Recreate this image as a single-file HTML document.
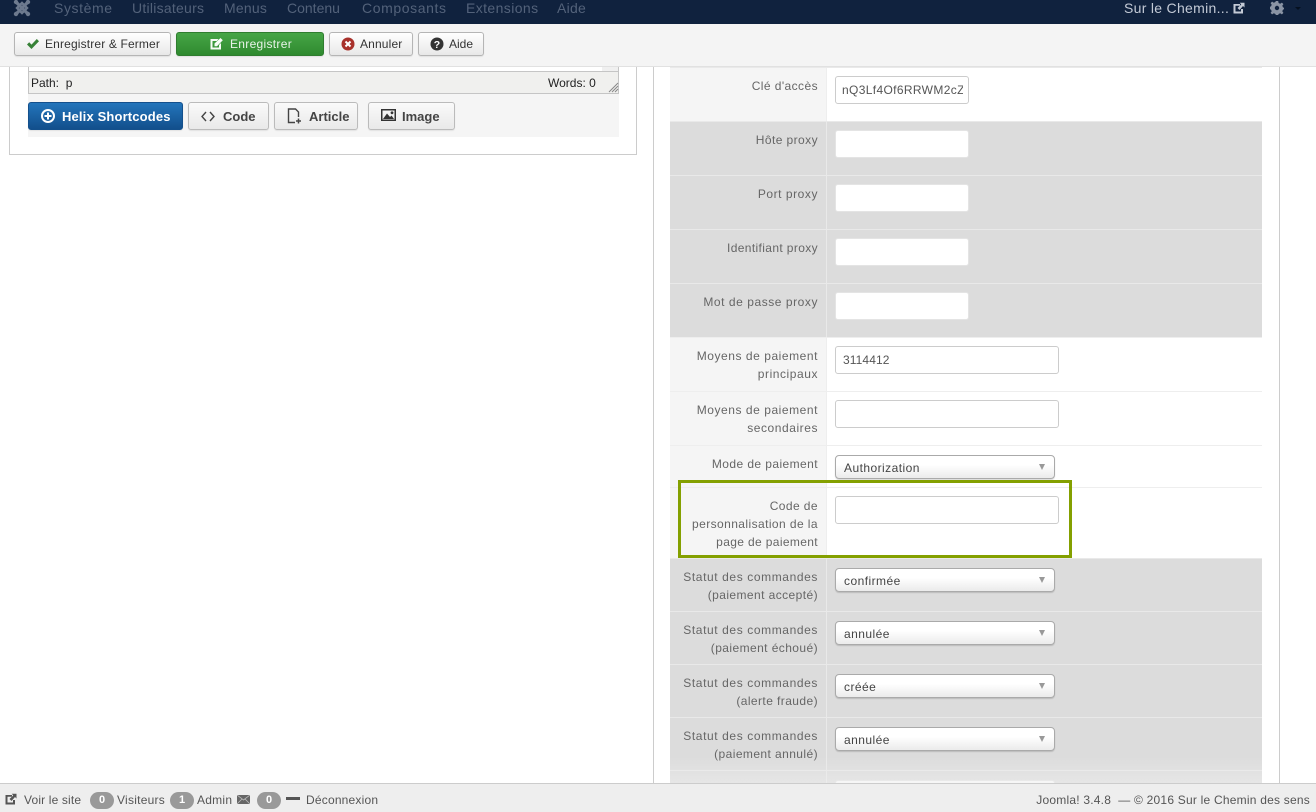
<!DOCTYPE html>
<html><head><meta charset="utf-8"><title>Joomla</title>
<style>
html,body{margin:0;padding:0;width:1316px;height:812px;overflow:hidden;background:#fff;font-family:"Liberation Sans",sans-serif;font-size:12px;color:#555}
.a{position:absolute}
svg{position:absolute;display:block}
#nav{left:0;top:0;width:1316px;height:24px;background:#10223e}
#nav span{position:absolute;top:-1px;font-size:14px;line-height:18px;color:#53627a;white-space:nowrap}
#bar{left:0;top:24px;width:1316px;height:42px;background:#f4f4f4;border-bottom:1px solid #e1e1e1;z-index:5}
.b{position:absolute;box-sizing:border-box;border:1px solid #b5b5b5;border-radius:3px;background:linear-gradient(#fff,#e8e8e8);color:#333;font-size:12px;white-space:nowrap;box-shadow:0 1px 1px rgba(0,0,0,.08)}
.b i{position:absolute;font-style:normal;white-space:nowrap}
.h{font-weight:bold;font-size:13px;color:#444;border-color:#bbb;background:linear-gradient(#fafafa,#e9e9e9)}
.row{position:absolute;left:670px;width:592px;box-sizing:border-box;border-top:1px solid #eee}
.row.g{background:#dcdcdc;border-top-color:#e9e9e9}
.lab{position:absolute;left:0;top:0;bottom:0;width:157px;box-sizing:border-box;background:#f5f5f5;border-right:1px solid #eee;text-align:right;padding-right:8px;color:#666;font-size:12px;line-height:18px;letter-spacing:.42px}
.row.g .lab{background:#dcdcdc;border-right-color:#e9e9e9;color:#666}
.lab div{position:absolute;right:8px;white-space:nowrap}
.lab .s{letter-spacing:.6px}
.lab .m{letter-spacing:.55px}
.in{position:absolute;box-sizing:border-box;height:28px;background:#fff;border:1px solid #ccc;border-radius:3px;font-size:12px;color:#555;line-height:26px;padding-left:7px;overflow:hidden;white-space:nowrap;letter-spacing:.1px}
.sel{position:absolute;left:835px;width:220px;height:24px;box-sizing:border-box;border:1px solid #aaa;border-radius:4px;background:linear-gradient(#fff 40%,#ebebeb);box-shadow:0 1px 1px rgba(0,0,0,.15);font-size:12px;color:#444;line-height:24px;padding-left:8px;letter-spacing:.45px}
.sel:after{content:"";position:absolute;right:9px;top:8px;border-left:3.5px solid transparent;border-right:3.5px solid transparent;border-top:6px solid #999}
#foot{left:0;top:783px;width:1316px;height:29px;background:#eee;border-top:1px solid #ccc;box-sizing:border-box;z-index:6}
#foot span{position:absolute;top:8px;line-height:16px;font-size:12px;color:#555;white-space:nowrap;letter-spacing:.15px}
.pill{position:absolute;top:8px;width:24px;height:17px;border-radius:9px;background:#999;color:#fff;text-align:center;font-size:11px;font-weight:bold;line-height:17px}
</style></head><body>

<div id="nav" class="a">
<svg style="left:13px;top:-1px" width="18" height="18" viewBox="0 0 18 18"><g stroke="#6d7a8e" stroke-width="3.2" fill="none"><path d="M3 3L15 15M15 3L3 15"/><path d="M4 9L9 4L14 9L9 14Z" stroke-width="2.4"/></g><g fill="#6d7a8e"><circle cx="3" cy="3" r="2.2"/><circle cx="15" cy="3" r="2.2"/><circle cx="3" cy="15" r="2.2"/><circle cx="15" cy="15" r="2.2"/></g></svg>
<span style="left:54px;letter-spacing:.6px">Système</span>
<span style="left:132px;letter-spacing:.25px">Utilisateurs</span>
<span style="left:224px;letter-spacing:.2px">Menus</span>
<span style="left:287px">Contenu</span>
<span style="left:362px;letter-spacing:.6px">Composants</span>
<span style="left:466px;letter-spacing:.4px">Extensions</span>
<span style="left:557px;letter-spacing:.25px">Aide</span>
<span style="left:1124px;color:#c3cad6;letter-spacing:.3px">Sur le Chemin...</span>
<svg style="left:1233px;top:2px" width="12" height="12" viewBox="0 0 12 12"><path d="M0.5 2H7V3.8H2.5V9.5H8V7H10V11.5H0.5Z" fill="#c3cad6"/><path d="M4.5 6L8.2 2.5L6.8 .8H11.5V5.5L10 4L6.5 8Z" fill="#c3cad6"/></svg>
<svg style="left:1270px;top:1px" width="14" height="14" viewBox="0 0 14 14"><path d="M5.8 0H8.2L8.6 2L10.2 2.7L11.9 1.6L13.4 3.1L12.3 4.8L13 6.4L14 6.8V8.2L13 8.6L12.3 10.2L13.4 11.9L11.9 13.4L10.2 12.3L8.6 13L8.2 14H5.8L5.4 13L3.8 12.3L2.1 13.4L.6 11.9L1.7 10.2L1 8.6L0 8.2V5.8L1 5.4L1.7 3.8L.6 2.1L2.1 .6L3.8 1.7L5.4 1Z M7 4.8A2.2 2.2 0 1 0 7 9.2A2.2 2.2 0 1 0 7 4.8Z" fill="#8a94a4" fill-rule="evenodd"/></svg>
<svg style="left:1294px;top:7px" width="8" height="4" viewBox="0 0 8 4"><path d="M1 0H7L4 3Z" fill="#05101f"/></svg>
</div>

<div id="bar" class="a">
<div class="b" style="left:14px;top:8px;width:157px;height:24px"><svg style="left:11px;top:5px" width="14" height="12" viewBox="0 0 14 12"><path d="M1 6.5L3.2 4.3L5.5 6.6L10.8 1L13 3.2L5.5 11Z" fill="#378137"/></svg><i style="left:30px;top:4px;line-height:14px;letter-spacing:.15px">Enregistrer &amp; Fermer</i></div>
<div class="b" style="left:176px;top:8px;width:148px;height:24px;background:linear-gradient(#46a546,#2f8a2f);border-color:#2f7d2f;color:#e8f3e8"><svg style="left:33px;top:5px" width="13" height="12" viewBox="0 0 13 12"><path d="M.5 1H8.5L6.8 3H2.5V9.5H9V7L11 5V11.5H.5Z" fill="#f6fbf6"/><path d="M4.5 5.5L10.5 0L12.8 2.2L7 8.2H4.5Z" fill="#f6fbf6"/></svg><i style="left:53px;top:4px;line-height:14px;letter-spacing:.3px">Enregistrer</i></div>
<div class="b" style="left:329px;top:8px;width:84px;height:24px"><svg style="left:11px;top:4px" width="14" height="14" viewBox="0 0 14 14"><circle cx="7" cy="7" r="6.5" fill="#a8312b"/><path d="M4.5 4.5L9.5 9.5M9.5 4.5L4.5 9.5" stroke="#fff" stroke-width="2"/></svg><i style="left:30px;top:4px;line-height:14px;letter-spacing:.15px">Annuler</i></div>
<div class="b" style="left:418px;top:8px;width:66px;height:24px"><svg style="left:11px;top:4px" width="14" height="14" viewBox="0 0 14 14"><circle cx="7" cy="7" r="6.5" fill="#333"/><text x="7" y="11" font-family="Liberation Sans" font-size="10.5" font-weight="bold" fill="#fff" text-anchor="middle">?</text></svg><i style="left:30px;top:4px;line-height:14px">Aide</i></div>
</div>

<!-- left column -->
<div class="a" style="left:9px;top:60px;width:628px;height:95px;box-sizing:border-box;border:1px solid #ccc;border-top:none"></div>
<div class="a" style="left:28px;top:66px;width:591px;height:71px;background:#f5f5f5"></div>
<div class="a" style="left:28px;top:66px;width:591px;height:28px;box-sizing:border-box;border:1px solid #c5c5c5;border-top:none;background:#fff"></div>
<div class="a" style="left:602px;top:66px;width:16px;height:5px;background:#f0f0f0"></div>
<div class="a" style="left:29px;top:71px;width:589px;height:22px;background:#f0f0ee;border-top:1px solid #c5c5c5;box-sizing:border-box;color:#222;font-size:12px;line-height:22px"><span class="a" style="left:2px;top:0">Path:&nbsp; p</span><span class="a" style="left:519px;top:0;white-space:nowrap">Words: 0</span></div>
<svg style="left:608px;top:82px" width="11" height="11" viewBox="0 0 11 11"><path d="M1 10L10 1M4 10L10 4M7 10L10 7" stroke="#888" stroke-width="1"/></svg>

<div class="b h" style="left:28px;top:102px;width:155px;height:28px;background:linear-gradient(#2375bb,#124f8c);border-color:#14508c;color:#fff"><svg style="left:12px;top:6px" width="14" height="14" viewBox="0 0 14 14"><circle cx="7" cy="7" r="6" fill="none" stroke="#fff" stroke-width="2"/><path d="M7 3.5V10.5M3.5 7H10.5" stroke="#fff" stroke-width="2"/></svg><i style="left:33px;top:6px;line-height:16px;letter-spacing:.15px">Helix Shortcodes</i></div>
<div class="b h" style="left:188px;top:102px;width:81px;height:28px"><svg style="left:12px;top:8px" width="14" height="11" viewBox="0 0 14 11"><path d="M5 1L1 5.5L5 10M9 1L13 5.5L9 10" fill="none" stroke="#444" stroke-width="1.4"/></svg><i style="left:34px;top:6px;line-height:16px">Code</i></div>
<div class="b h" style="left:274px;top:102px;width:84px;height:28px"><svg style="left:12px;top:5px" width="15" height="16" viewBox="0 0 15 16"><path d="M8 14.5H1.5V1H8.5L11.5 4V9" fill="none" stroke="#444" stroke-width="1.4"/><path d="M11.5 10.5V15.5M9 13H14" stroke="#444" stroke-width="1.5"/></svg><i style="left:34px;top:6px;line-height:16px">Article</i></div>
<div class="b h" style="left:368px;top:102px;width:87px;height:28px"><svg style="left:12px;top:6px" width="15" height="12" viewBox="0 0 15 12"><path d="M0 0H15V12H0Z M1.5 1.5V10.5H13.5V1.5Z" fill="#333" fill-rule="evenodd"/><path d="M2 10L6 4.5L9 8L10.5 6.5L13 10Z" fill="#333"/><circle cx="11" cy="3.8" r="1.4" fill="#333"/></svg><i style="left:33px;top:6px;line-height:16px">Image</i></div>

<!-- right column lines -->
<div class="a" style="left:653px;top:66px;width:1px;height:720px;background:#ccc"></div>
<div class="a" style="left:1279px;top:66px;width:1px;height:720px;background:#ccc"></div>

<div class="row" style="top:67px;height:54px;border-top-color:#e9e9e9"><div class="lab"><div style="top:9px">Clé d'accès</div></div></div>
<div class="row g" style="top:121px;height:54px"><div class="lab"><div style="top:9px">Hôte proxy</div></div></div>
<div class="row g" style="top:175px;height:54px"><div class="lab"><div class="m" style="top:9px">Port proxy</div></div></div>
<div class="row g" style="top:229px;height:54px"><div class="lab"><div style="top:9px;letter-spacing:.37px">Identifiant proxy</div></div></div>
<div class="row g" style="top:283px;height:54px"><div class="lab"><div class="m" style="top:9px">Mot de passe proxy</div></div></div>
<div class="row" style="top:337px;height:54px"><div class="lab"><div class="m" style="top:9px">Moyens de paiement</div><div class="m" style="top:27px">principaux</div></div></div>
<div class="row" style="top:391px;height:54px"><div class="lab"><div class="m" style="top:9px">Moyens de paiement</div><div class="m" style="top:27px">secondaires</div></div></div>
<div class="row" style="top:445px;height:42px"><div class="lab"><div style="top:9px">Mode de paiement</div></div></div>
<div class="row" style="top:487px;height:71px"><div class="lab"><div style="top:9px">Code de</div><div style="top:27px">personnalisation de la</div><div style="top:45px;letter-spacing:.36px">page de paiement</div></div></div>
<div class="row g" style="top:558px;height:53px"><div class="lab"><div class="s" style="top:9px">Statut des commandes</div><div style="top:27px">(paiement accepté)</div></div></div>
<div class="row g" style="top:611px;height:53px"><div class="lab"><div class="s" style="top:9px">Statut des commandes</div><div style="top:27px">(paiement échoué)</div></div></div>
<div class="row g" style="top:664px;height:53px"><div class="lab"><div class="s" style="top:9px">Statut des commandes</div><div style="top:27px">(alerte fraude)</div></div></div>
<div class="row g" style="top:717px;height:53px"><div class="lab"><div class="s" style="top:9px">Statut des commandes</div><div style="top:27px">(paiement annulé)</div></div></div>
<div class="row g" style="top:770px;height:14px"><div class="lab"></div></div>

<div class="in" style="left:835px;top:76px;width:134px;padding-left:6px"><div style="width:121px;overflow:hidden;letter-spacing:.35px">nQ3Lf4Of6RRWM2cZ</div></div>
<div class="in" style="left:835px;top:130px;width:134px;border-color:#e4e4e4"></div>
<div class="in" style="left:835px;top:184px;width:134px;border-color:#e4e4e4"></div>
<div class="in" style="left:835px;top:238px;width:134px;border-color:#e4e4e4"></div>
<div class="in" style="left:835px;top:292px;width:134px;border-color:#e4e4e4"></div>
<div class="in" style="left:835px;top:346px;width:224px">3114412</div>
<div class="in" style="left:835px;top:400px;width:224px"></div>
<div class="sel" style="top:455px">Authorization</div>
<div class="in" style="left:835px;top:496px;width:224px"></div>
<div class="sel" style="top:568px">confirmée</div>
<div class="sel" style="top:621px">annulée</div>
<div class="sel" style="top:674px">créée</div>
<div class="sel" style="top:727px">annulée</div>
<div class="in" style="left:835px;top:780px;width:220px;border-color:#e4e4e4"></div>

<div class="a" style="left:670px;top:757px;width:592px;height:26px;background:linear-gradient(rgba(238,238,238,0),rgba(238,238,238,.55));"></div>

<div class="a" style="left:678px;top:480px;width:394px;height:78px;box-sizing:border-box;border:3px solid #84a000"></div>

<div id="foot" class="a">
<svg style="left:5px;top:9px" width="12" height="12" viewBox="0 0 12 12"><path d="M0.5 2H7V3.8H2.5V9.5H8V7H10V11.5H0.5Z" fill="#555"/><path d="M4.5 6L8.2 2.5L6.8 .8H11.5V5.5L10 4L6.5 8Z" fill="#555"/></svg>
<span style="left:24px">Voir le site</span>
<div class="pill" style="left:90px">0</div><span style="left:117px;letter-spacing:.25px">Visiteurs</span>
<div class="pill" style="left:170px">1</div><span style="left:197px;letter-spacing:.25px">Admin</span>
<svg style="left:237px;top:11px" width="13" height="9" viewBox="0 0 13 9"><rect width="13" height="9" fill="#666"/><path d="M0 0L6.5 5L13 0M0 9L5 4M13 9L8 4" stroke="#bbb" stroke-width=".8" fill="none"/></svg>
<div class="pill" style="left:257px">0</div>
<div class="a" style="left:286px;top:13px;width:14px;height:3px;background:#555"></div>
<span style="left:306px;letter-spacing:.2px">Déconnexion</span>
<span style="right:6px;letter-spacing:.22px">Joomla! 3.4.8 &nbsp;— © 2016 Sur le Chemin des sens</span>
</div>
</body></html>
